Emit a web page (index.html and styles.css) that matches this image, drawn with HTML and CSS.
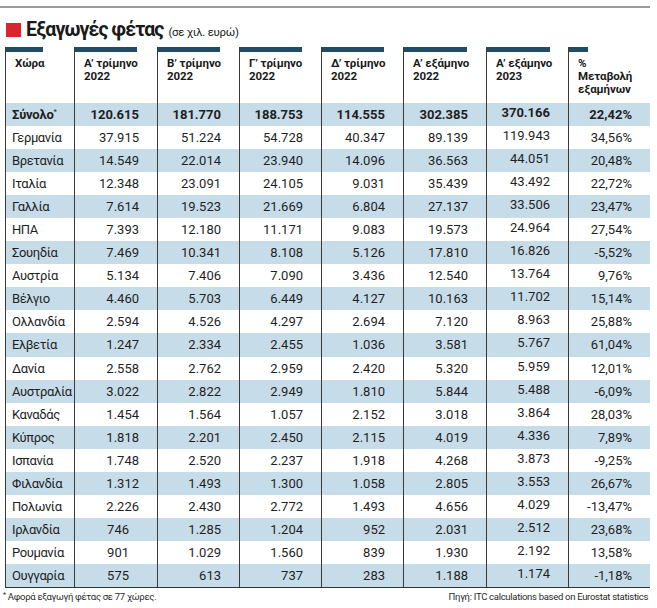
FILE: index.html
```html
<!DOCTYPE html>
<html lang="el">
<head>
<meta charset="utf-8">
<title>Εξαγωγές φέτας</title>
<link rel="stylesheet" href="styles.css">
</head>
<body>
<div class="page">
  <div class="topline"></div>
  <h1 class="title"><span class="square"></span><span class="title-main">Εξαγωγές φέτας</span><span class="title-sub">(σε χιλ. ευρώ)</span></h1>
  <table class="data">
    <colgroup>
      <col class="c-country"><col class="c-w83"><col class="c-w82"><col class="c-w82"><col class="c-w82"><col class="c-w83"><col class="c-w82"><col class="c-w82">
    </colgroup>
    <thead>
      <tr>
        <th><div class="bar bar-short"></div><div class="hd">Χώρα</div></th>
        <th><div class="bar"></div><div class="hd">Α’ τρίμηνο<br>2022</div></th>
        <th><div class="bar"></div><div class="hd">Β’ τρίμηνο<br>2022</div></th>
        <th><div class="bar"></div><div class="hd">Γ’ τρίμηνο<br>2022</div></th>
        <th><div class="bar"></div><div class="hd">Δ’ τρίμηνο<br>2022</div></th>
        <th><div class="bar bar-wide"></div><div class="hd">Α’ εξάμηνο<br>2022</div></th>
        <th><div class="bar bar-wide"></div><div class="hd">Α’ εξάμηνο<br>2023</div></th>
        <th><div class="bar bar-tiny"></div><div class="hd">%<br>Μεταβολή<br>εξαμήνων</div></th>
      </tr>
    </thead>
    <tbody>
      <tr class="total"><td>Σύνολο<sup>*</sup></td><td>120.615</td><td>181.770</td><td>188.753</td><td>114.555</td><td>302.385</td><td class="lift">370.166</td><td>22,42%</td></tr>
      <tr><td>Γερμανία</td><td>37.915</td><td>51.224</td><td>54.728</td><td>40.347</td><td>89.139</td><td class="lift">119.943</td><td>34,56%</td></tr>
      <tr><td>Βρετανία</td><td>14.549</td><td>22.014</td><td>23.940</td><td>14.096</td><td>36.563</td><td class="lift">44.051</td><td>20,48%</td></tr>
      <tr><td>Ιταλία</td><td>12.348</td><td>23.091</td><td>24.105</td><td>9.031</td><td>35.439</td><td class="lift">43.492</td><td>22,72%</td></tr>
      <tr><td>Γαλλία</td><td>7.614</td><td>19.523</td><td>21.669</td><td>6.804</td><td>27.137</td><td class="lift">33.506</td><td>23,47%</td></tr>
      <tr><td>ΗΠΑ</td><td>7.393</td><td>12.180</td><td>11.171</td><td>9.083</td><td>19.573</td><td class="lift">24.964</td><td>27,54%</td></tr>
      <tr><td>Σουηδία</td><td>7.469</td><td>10.341</td><td>8.108</td><td>5.126</td><td>17.810</td><td class="lift">16.826</td><td>-5,52%</td></tr>
      <tr><td>Αυστρία</td><td>5.134</td><td>7.406</td><td>7.090</td><td>3.436</td><td>12.540</td><td class="lift">13.764</td><td>9,76%</td></tr>
      <tr><td>Βέλγιο</td><td>4.460</td><td>5.703</td><td>6.449</td><td>4.127</td><td>10.163</td><td class="lift">11.702</td><td>15,14%</td></tr>
      <tr><td>Ολλανδία</td><td>2.594</td><td>4.526</td><td>4.297</td><td>2.694</td><td>7.120</td><td class="lift">8.963</td><td>25,88%</td></tr>
      <tr><td>Ελβετία</td><td>1.247</td><td>2.334</td><td>2.455</td><td>1.036</td><td>3.581</td><td class="lift">5.767</td><td>61,04%</td></tr>
      <tr><td>Δανία</td><td>2.558</td><td>2.762</td><td>2.959</td><td>2.420</td><td>5.320</td><td class="lift">5.959</td><td>12,01%</td></tr>
      <tr><td>Αυστραλία</td><td>3.022</td><td>2.822</td><td>2.949</td><td>1.810</td><td>5.844</td><td class="lift">5.488</td><td>-6,09%</td></tr>
      <tr><td>Καναδάς</td><td>1.454</td><td>1.564</td><td>1.057</td><td>2.152</td><td>3.018</td><td class="lift">3.864</td><td>28,03%</td></tr>
      <tr><td>Κύπρος</td><td>1.818</td><td>2.201</td><td>2.450</td><td>2.115</td><td>4.019</td><td class="lift">4.336</td><td>7,89%</td></tr>
      <tr><td>Ισπανία</td><td>1.748</td><td>2.520</td><td>2.237</td><td>1.918</td><td>4.268</td><td class="lift">3.873</td><td>-9,25%</td></tr>
      <tr><td>Φιλανδία</td><td>1.312</td><td>1.493</td><td>1.300</td><td>1.058</td><td>2.805</td><td class="lift">3.553</td><td>26,67%</td></tr>
      <tr><td>Πολωνία</td><td>2.226</td><td>2.430</td><td>2.772</td><td>1.493</td><td>4.656</td><td class="lift">4.029</td><td>-13,47%</td></tr>
      <tr><td>Ιρλανδία</td><td class="short">746</td><td>1.285</td><td>1.204</td><td>952</td><td>2.031</td><td class="lift">2.512</td><td>23,68%</td></tr>
      <tr><td>Ρουμανία</td><td class="short">901</td><td>1.029</td><td>1.560</td><td>839</td><td>1.930</td><td class="lift">2.192</td><td>13,58%</td></tr>
      <tr><td>Ουγγαρία</td><td class="short">575</td><td>613</td><td>737</td><td>283</td><td>1.188</td><td class="lift">1.174</td><td>-1,18%</td></tr>
    </tbody>
  </table>
  <div class="foot">
    <span class="note"><sup>*</sup> Αφορά εξαγωγή φέτας σε 77 χώρες.</span>
    <span class="source">Πηγή: ITC calculations based on Eurostat statistics</span>
  </div>
</div>
</body>
</html>
```

FILE: styles.css
```css
* { box-sizing: border-box; }

body {
  margin: 0;
  background: #ffffff;
  font-family: Roboto, "Open Sans", "Liberation Sans", sans-serif;
  color: #1c1c1c;
}

.page {
  width: 657px;
  padding-top: 6px;
}

.topline {
  width: 650px;
  height: 2px;
  background: #9b9b9b;
}

.title {
  margin: 0;
  padding: 11px 0 0 6px;
  height: 39px;
  display: flex;
  align-items: baseline;
  font-weight: 700;
}

.square {
  display: inline-block;
  width: 15px;
  height: 14px;
  background: #d7262e;
  margin-right: 5px;
  align-self: flex-start;
  margin-top: 4px;
}

.title-main {
  font-size: 19.5px;
  letter-spacing: -0.9px;
  line-height: 22px;
  color: #1a1a1a;
}

.title-sub {
  font-size: 11.5px;
  font-weight: 400;
  margin-left: 5px;
  letter-spacing: -0.3px;
}

.data {
  margin-left: 5px;
  width: 645px;
  table-layout: fixed;
  border-collapse: separate;
  border-spacing: 0;
  border-bottom: 1px solid #333;
}

.c-country { width: 69px; }
.c-w83 { width: 83px; }
.c-w82 { width: 82px; }

.data th {
  border-left: 1px solid #3a3a3a;
  padding: 0;
  height: 56px;
  vertical-align: top;
  text-align: left;
  font-weight: 700;
}

.bar {
  width: 62px;
  height: 5px;
  background: #1f4c69;
}
.bar-short { width: 37px; }
.bar-wide { width: 63px; }
.bar-tiny { width: 19px; }

.hd {
  padding: 5px 2px 0 9px;
  font-size: 11.5px;
  line-height: 13px;
  letter-spacing: -0.1px;
  color: #1a1a1a;
}

.data td {
  border-left: 1px solid #3a3a3a;
  height: 23.05px;
  padding: 0 18px 0 0;
  text-align: right;
  vertical-align: middle;
  font-size: 13px;
  line-height: 15px;
  color: #1f1f1f;
  white-space: nowrap;
}

.data td:first-child {
  text-align: left;
  padding: 0 0 0 6px;
  letter-spacing: -0.4px;
}

.data td.short { padding-right: 28px; }
.data td.lift { padding-bottom: 4px; }

.data tbody tr:nth-child(odd) td { background: #c7dce9; }

.data tr.total td { font-weight: 700; }
.data tr.total td:first-child { letter-spacing: -0.2px; }

.data sup {
  font-size: 8px;
  vertical-align: 5px;
  line-height: 0;
  font-weight: 400;
}

.foot {
  width: 650px;
  display: flex;
  justify-content: space-between;
  padding: 2px 2px 0 3px;
  font-size: 9.5px;
  letter-spacing: -0.3px;
  color: #2a2a2a;
  line-height: 14px;
}

.foot sup {
  font-size: 7px;
  vertical-align: 3px;
  line-height: 0;
}
```
